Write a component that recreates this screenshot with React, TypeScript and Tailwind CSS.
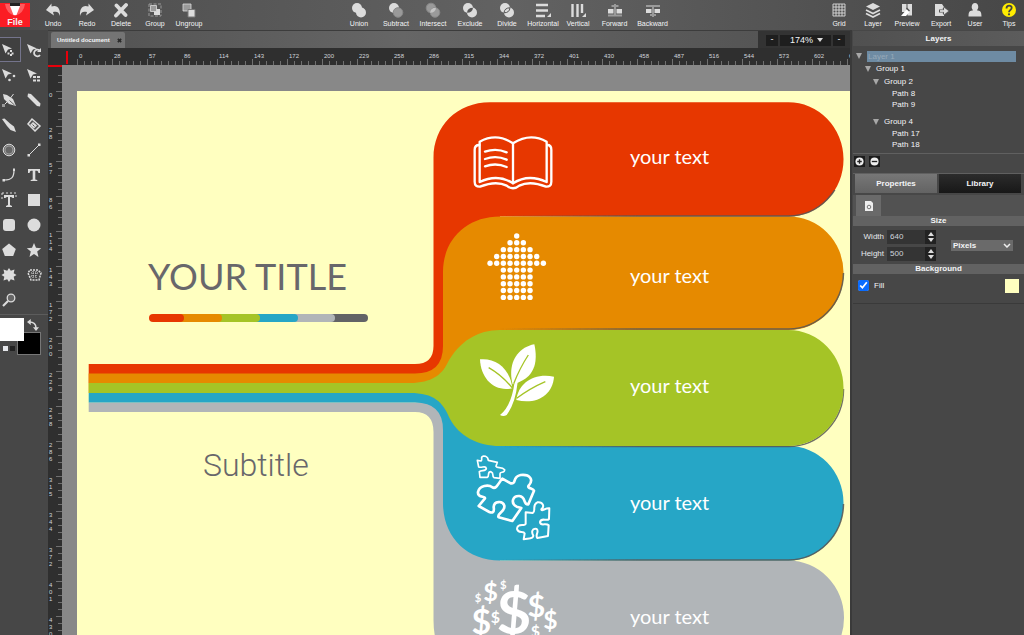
import React, { useState } from 'react';

const LIGHT = '#dcdcdc';
const DIM = '#9a9a9a';

type Item = { label: string; icon: React.ReactNode };

const corner = <path d="M16 11v4h-4z" fill={LIGHT} />;

const editItems: Item[] = [
  { label: 'Undo', icon: <path d="M1 8l5.500-6.500v3c6-2 9 2 8.500 9.500-1-4-3-5-7-4l1 3.500z" fill={LIGHT} /> },
  { label: 'Redo', icon: <path d="M15 8L9.500 1.500v3C3.500 2.500.5 6.500 1 14c1-4 3-5 7-4l-1 3.500z" fill={LIGHT} /> },
  { label: 'Delete', icon: <path d="M3.500 3.500l9 9.500M13 3L3 13.500" stroke={LIGHT} strokeWidth="3.800" strokeLinecap="round" /> },
  {
    label: 'Group',
    icon: (
      <>
        <path d="M2 2h12v12H2z" fill="none" stroke={DIM} strokeDasharray="3 1.5" />
        <path d="M7 7h6v6H7z" fill={LIGHT} />
        <path d="M3.500 3.500h6v6h-6z" fill={DIM} stroke={LIGHT} strokeWidth=".8" />
      </>
    ),
  },
  {
    label: 'Ungroup',
    icon: (
      <>
        <path d="M2 2h8v7H2z" fill={DIM} stroke={LIGHT} strokeWidth=".8" />
        <path d="M7 7.500h7V15H7z" fill={LIGHT} stroke="#777" />
      </>
    ),
  },
];

const booleanItems: Item[] = [
  {
    label: 'Union',
    icon: <><circle cx="6" cy="6" r="5" fill={LIGHT} /><circle cx="10" cy="10.500" r="5" fill={LIGHT} /></>,
  },
  {
    label: 'Subtract',
    icon: <><circle cx="6" cy="6" r="5" fill={LIGHT} /><circle cx="10" cy="10.500" r="4.800" fill={DIM} stroke="#888" /></>,
  },
  {
    label: 'Intersect',
    icon: (
      <>
        <circle cx="6" cy="6" r="4.800" fill={DIM} stroke="#888" />
        <circle cx="10" cy="10.500" r="4.800" fill={DIM} stroke="#888" />
        <path d="M5 10.800Q5.500 5.800 11 5.800 10.500 10.800 5 10.800z" fill="#c4c4c4" />
      </>
    ),
  },
  {
    label: 'Exclude',
    icon: (
      <>
        <circle cx="6" cy="6" r="5" fill={LIGHT} />
        <circle cx="10" cy="10.500" r="5" fill={LIGHT} />
        <path d="M5 10.800Q5.500 5.800 11 5.800 10.500 10.800 5 10.800z" fill="#555" />
      </>
    ),
  },
  {
    label: 'Divide',
    icon: (
      <>
        <circle cx="6" cy="6" r="5" fill={LIGHT} />
        <circle cx="10" cy="10.500" r="5" fill={LIGHT} />
        <path d="M5 10.800Q5.500 5.800 11 5.800 10.500 10.800 5 10.800z" fill={LIGHT} stroke="#555" />
      </>
    ),
  },
];

const alignItems: Item[] = [
  {
    label: 'Horizontal',
    icon: <><path d="M1 3h12M1 8.500h12M1 14h9" stroke={LIGHT} strokeWidth="2.400" />{corner}</>,
  },
  {
    label: 'Vertical',
    icon: <><path d="M2.500 2v13M7.500 2v13M12 2v9" stroke={LIGHT} strokeWidth="2.400" />{corner}</>,
  },
];

const orderItems: Item[] = [
  {
    label: 'Forward',
    icon: (
      <>
        <path d="M1 7h5.500v4.500H1zM9.500 7H15v4.500H9.500z" fill={LIGHT} />
        <path d="M8 2v11M4.500 4h7M1 13.500h14" stroke={DIM} strokeWidth="2" />
      </>
    ),
  },
  {
    label: 'Backward',
    icon: (
      <>
        <path d="M1 7h5.500v4H1zM9.500 7H15v4H9.500z" fill={LIGHT} />
        <path d="M8 3v12M1 4h14M5 13h6" stroke={DIM} strokeWidth="2" />
      </>
    ),
  },
];

const viewItems: Item[] = [
  {
    label: 'Grid',
    icon: <path d="M2 2h12v12H2zM5 2v12M8 2v12M11 2v12M2 5h12M2 8h12M2 11h12" fill="none" stroke={LIGHT} strokeWidth=".9" />,
  },
  {
    label: 'Layer',
    icon: (
      <>
        <path d="M8 1l7 3.500-7 3.500-7-3.500z" fill={LIGHT} />
        <path d="M1 8l7 3.500L15 8M1 11.500L8 15l7-3.500" fill="none" stroke={LIGHT} strokeWidth="1.700" />
      </>
    ),
  },
  {
    label: 'Preview',
    icon: (
      <>
        <path d="M3 2h4.500v8H3zM8.500 2H13v11.500H8.500z" fill={LIGHT} />
        <path d="M2 14l6-7 2.500 3L7 14z" fill="#fff" />
        <path d="M7.500 6l3 3" stroke="#555" strokeWidth="1.500" />
      </>
    ),
  },
  {
    label: 'Export',
    icon: (
      <>
        <path d="M2 2h7l2 3v9H2z" fill={LIGHT} />
        <path d="M6 9h8M10.500 5.500L15 9l-4.500 3.500" fill="none" stroke="#555" strokeWidth="3" />
        <path d="M7 9h6" stroke={LIGHT} strokeWidth="1.800" />
        <path d="M11 5.500L15.500 9 11 12.500z" fill={LIGHT} />
      </>
    ),
  },
  {
    label: 'User',
    icon: <path d="M8 1c4 0 4 6 1.800 7.200C13 8.800 14.500 9 14.500 14.500h-13c0-5.500 1.500-5.700 4.700-6.300C4 7 4 1 8 1z" fill={LIGHT} />,
  },
  {
    label: 'Tips',
    icon: (
      <>
        <circle cx="8" cy="8" r="7" fill="#ffec00" />
        <path d="M5.500 6.500c0-4 5.500-3.500 5.200-.5C10.500 8 8 8 8 10.200" fill="none" stroke="#444" strokeWidth="1.800" />
        <circle cx="8" cy="12.300" r="1.100" fill="#444" />
      </>
    ),
  },
];

const pointer = <path d="M1 2l10 4.500-4 1-2.500 4z" fill={LIGHT} />;

const tools: Item[] = [
  { label: 'Move', icon: <>{pointer}<path d="M10 8v7M6.500 11.500h7" stroke={LIGHT} strokeWidth="2" strokeDasharray="2 2" /></> },
  { label: 'Rotate', icon: <>{pointer}<path d="M14 9a3.300 3.300 0 1 0 0 4" fill="none" stroke={LIGHT} strokeWidth="1.800" /><path d="M15 6v4h-4z" fill={LIGHT} /></> },
  { label: 'Edit nodes', icon: <>{pointer}<circle cx="8.500" cy="13" r="1.300" fill={LIGHT} /><circle cx="13" cy="9" r="1.300" fill={LIGHT} /></> },
  { label: 'Edit segments', icon: <>{pointer}<path d="M7 10h8M7 13.500h8" stroke={LIGHT} strokeWidth="1.800" strokeDasharray="3 1" /></> },
  {
    label: 'Pen',
    icon: (
      <>
        <path d="M2 2l4 1 6 4 3 7-7-2-5-5z" fill={LIGHT} />
        <path d="M3 13l5-5M12.500 2l-3 4" stroke={LIGHT} />
        <path d="M1 12h3v3H1z" fill={DIM} />
        <path d="M8.500 8.500l5 4.500" stroke="#666" />
      </>
    ),
  },
  { label: 'Pencil', icon: <path d="M2 1.500l3 .5L14.500 11.500l-.5 3-3-.5L1.500 4.500z" fill={LIGHT} /> },
  { label: 'Brush', icon: <path d="M1 2l2.500-.5L9 6.500l4 3 2 5.500-5.500-2L6 9z" fill={LIGHT} /> },
  {
    label: 'Eraser',
    icon: (
      <>
        <path d="M6 2l8 7-5 5-7-7z" fill="#555" stroke={LIGHT} strokeWidth="1.500" />
        <path d="M7 5l4 3.500-3 3L4 8z" fill={LIGHT} />
        <path d="M6.500 7.500l2 2" stroke="#555" />
      </>
    ),
  },
  { label: 'Circle outline', icon: <><circle cx="8" cy="8" r="5.800" fill="#777" stroke={LIGHT} /><circle cx="8" cy="8" r="4" fill="#666" stroke={DIM} /></> },
  { label: 'Line', icon: <><path d="M3 13L13 3" stroke={LIGHT} /><path d="M1.500 12h2.500v2.500H1.500zM12 1.500h2.500V4H12z" fill={LIGHT} /></> },
  { label: 'Curve', icon: <><path d="M3 13c8 0 10-3 10-10" fill="none" stroke={LIGHT} strokeWidth="1.200" /><path d="M1.500 12h2.500v2.500H1.500zM12 1.500h2V4h-2z" fill={LIGHT} /></> },
  { label: 'Text', icon: <path d="M2 2h12v4h-1.500C12 4 11.500 3.800 9.300 3.800V12.500l2 .6V14H4.700v-.9l2-.6V3.800C4.500 3.800 4 4 3.500 6H2z" fill={LIGHT} /> },
  {
    label: 'Text box',
    icon: (
      <>
        <path d="M3 3h10v3h-1.500C11 5 10.500 5 9 5v8l2 1v1H5v-1l2-1V5C5.500 5 5 5 4.500 6H3z" fill={LIGHT} />
        <path d="M1 1h14v6M1 1v6" fill="none" stroke={LIGHT} strokeDasharray="2 2" />
      </>
    ),
  },
  { label: 'Rectangle', icon: <path d="M2 2h12v12H2z" fill={LIGHT} /> },
  { label: 'Rounded rectangle', icon: <rect x="2" y="2" width="12" height="12" rx="3" fill={LIGHT} /> },
  { label: 'Ellipse', icon: <circle cx="8" cy="8" r="6.500" fill={LIGHT} /> },
  { label: 'Polygon', icon: <path d="M8 1.500L14.800 7l-2.600 7H3.800L1.200 7z" fill={LIGHT} /> },
  { label: 'Star', icon: <path d="M8 1l2 4.800 5.200.4-4 3.400L12.500 15 8 12l-4.500 3 1.300-5.400-4-3.400L6 5.800z" fill={LIGHT} /> },
  { label: 'Burst', icon: <path d="M8 1l1.800 2.700L13.500 2.500l-.8 3.700L15.500 8l-2.800 1.800.8 3.700-3.700-1.200L8 15l-1.800-2.700-3.700 1.200.8-3.700L.5 8l2.800-1.800-.8-3.700 3.700 1.200z" fill={LIGHT} /> },
  {
    label: 'Pattern',
    icon: (
      <>
        <path d="M4 3h8l3 3-2 7H5L2 6z" fill="none" stroke={LIGHT} strokeWidth="1.500" strokeDasharray="2 1" />
        <path d="M5 6h7M5 9h6M7 4v8M10 4v8" stroke={LIGHT} strokeDasharray="1 1" />
      </>
    ),
  },
  { label: 'Zoom', icon: <><circle cx="10" cy="6" r="3.800" fill="#666" stroke={LIGHT} strokeWidth="1.300" /><path d="M7 9l-5 5" stroke={LIGHT} strokeWidth="2.200" /></> },
];

const layers = [
  { name: 'Group 1', row: 'h-[13px] pl-[12px]', open: true },
  { name: 'Group 2', row: 'h-[13px] pl-[20px]', open: true },
  { name: 'Path 8', row: 'h-[11px] pl-[39px]', open: false },
  { name: 'Path 9', row: 'h-[11px] pl-[39px]', open: false },
  { name: 'Group 4', row: 'mt-[5px] h-[13px] pl-[20px]', open: true },
  { name: 'Path 17', row: 'h-[11px] pl-[39px]', open: false },
  { name: 'Path 18', row: 'h-[11px] pl-[39px]', open: false },
];

// one major tick every 35px, labelled in document units
const ticks = (count: number) => Array.from({ length: count }, (_, i) => String(Math.floor(i * 28.67)));
const topMarks = ticks(23);
const sideMarks = ticks(16);
const minor = [0, 1, 2, 3, 4];

function Icon({ children, className = 'size-4' }: { children: React.ReactNode; className?: string }) {
  return (
    <svg viewBox="0 0 16 16" className={className} fill="none" aria-hidden="true">
      {children}
    </svg>
  );
}

function ToolbarButton({ item, className = '' }: { item: Item; className?: string }) {
  return (
    <button className={`flex flex-col items-center gap-[2px] ${className}`}>
      <Icon>{item.icon}</Icon>
      <span className="text-[7px] leading-[8px] text-gray-100">{item.label}</span>
    </button>
  );
}

function Header() {
  return (
    <header className="flex h-[30px] shrink-0 items-start justify-between overflow-hidden bg-linear-to-r from-[#4c4c4c] via-[#626262] to-[#474747] pt-[2px]">
      <div className="flex">
        <button className="mr-[6px] mt-px flex h-6 w-[30px] flex-col items-center bg-[#fb1d24]">
          <svg viewBox="0 0 30 14" className="h-[14px] w-[30px]" aria-hidden="true">
            <path d="M5 1q1 9 10 12q9-3 10-12" fill="#ff5a5e" />
            <path d="M10 3h10l-3.500 9h-3z" fill="#fff" />
            <path d="M10 0h10v3H10z" fill="#222" />
          </svg>
          <span className="text-[9px] leading-[10px] font-bold text-gray-100">File</span>
        </button>
        {editItems.map((item) => <ToolbarButton key={item.label} item={item} className="w-[34px]" />)}
      </div>
      <div className="flex pr-4">
        {booleanItems.map((item) => <ToolbarButton key={item.label} item={item} className="w-[37px]" />)}
        {alignItems.map((item) => <ToolbarButton key={item.label} item={item} className="w-[35px]" />)}
        {orderItems.map((item) => <ToolbarButton key={item.label} item={item} className="w-[38px]" />)}
      </div>
      <div className="-mr-[2px] flex">
        {viewItems.map((item) => <ToolbarButton key={item.label} item={item} className="w-[34px]" />)}
      </div>
    </header>
  );
}

function Tools() {
  const [active, setActive] = useState('Move');

  return (
    <nav className="w-12 shrink-0 overflow-hidden bg-[#474747] pt-[7px]">
      <div className="-ml-1 grid auto-rows-[25px] grid-cols-[25px_25px]">
        {tools.map((tool) => (
          <button
            key={tool.label}
            aria-label={tool.label}
            className={`flex items-center justify-center border ${tool.label === active ? 'border-[#74748c] bg-[#404040]' : 'border-transparent'}`}
            onClick={() => setActive(tool.label)}
          >
            <Icon>{tool.icon}</Icon>
          </button>
        ))}
      </div>
      <div className="mt-[2px] grid grid-cols-[17px_7px_17px] grid-rows-[14px_9px_14px] border-t border-[#5c5c5c] pt-[3px]">
        <button aria-label="Stroke color" className="col-start-2 col-end-4 row-start-2 row-end-4 border border-[#777] bg-black" />
        <button aria-label="Fill color" className="col-start-1 col-end-3 row-start-1 row-end-3 bg-white" />
        <button aria-label="Swap colors" className="col-start-3 row-start-1 flex items-center justify-center">
          <Icon className="size-3">
            <path d="M3 4q9 0 9 8" stroke={LIGHT} strokeWidth="2" />
            <path d="M5 0v8L0 4zM8 11h8l-4 5z" fill={LIGHT} />
          </Icon>
        </button>
        <button aria-label="Default colors" className="col-start-1 row-start-3 flex items-center gap-[2px] pl-[3px]">
          <span className="size-[5px] bg-gray-200" />
          <span className="size-[5px] bg-[#222]" />
        </button>
      </div>
    </nav>
  );
}

function TabBar() {
  return (
    <div className="flex h-[18px] shrink-0 border-t border-[#3c3c3c]">
      <div className="flex flex-1 items-end bg-linear-to-r from-[#505050] via-[#666] to-[#555] pl-[3px]">
        <div className="flex h-4 w-[74px] items-center justify-between rounded-t-xs bg-[#747474] pr-[3px] pl-[6px]">
          <span className="text-[6px] font-bold whitespace-nowrap text-gray-100">Untitled document</span>
          <button aria-label="Close document" className="text-[#2a2a2a]">
            <svg viewBox="0 0 6 6" className="size-[5px]" aria-hidden="true">
              <path d="M1 1l4 4M5 1L1 5" stroke="currentColor" strokeWidth="2" />
            </svg>
          </button>
        </div>
      </div>
      <div className="flex w-[92px] items-center gap-[2px] bg-[#333] pt-px pl-2 text-[9px] text-gray-100">
        <button aria-label="Zoom out" className="flex h-[11px] w-3 items-center justify-center bg-[#1e1e1e]">-</button>
        <div className="relative flex h-[11px] w-[51px] items-center bg-[#1e1e1e]">
          <select aria-label="Zoom level" className="h-[11px] w-full appearance-none pl-[10px] leading-[11px] outline-none">
            <option>174%</option>
          </select>
          <svg viewBox="0 0 6 4" className="pointer-events-none absolute right-2 h-1 w-[6px]" aria-hidden="true">
            <path d="M0 0h6L3 4z" fill="#ddd" />
          </svg>
        </div>
        <button aria-label="Zoom in" className="flex h-[11px] w-3 items-center justify-center bg-[#1e1e1e]">-</button>
      </div>
    </div>
  );
}

function TopRuler() {
  return (
    <div className="flex h-[17px] shrink-0 overflow-hidden bg-[#2f2f2f]">
      <div className="flex w-[29px] shrink-0 items-end pl-[18px]">
        <span className="mb-px h-[13px] w-[2px] bg-red-600" />
      </div>
      {topMarks.map((mark) => (
        <div key={mark} className="flex w-[35px] shrink-0 flex-col justify-end">
          <span className="pl-[2px] text-[6px] leading-[6px] text-gray-300">{mark}</span>
          <div className="flex items-end">
            {minor.map((n) => (
              <span key={n} className={`w-[7px] border-l border-[#707070] ${n === 0 ? 'h-[6px]' : 'h-1'}`} />
            ))}
          </div>
        </div>
      ))}
    </div>
  );
}

function SideRuler() {
  return (
    <div className="w-[14px] shrink-0 overflow-hidden bg-[#2f2f2f]">
      <div className="flex h-[26px] flex-col items-end">
        <span className="h-[2px] w-full bg-red-600" />
        <span className="h-[9px] w-1 border-b border-[#707070]" />
        <span className="h-[7px] w-1 border-b border-[#707070]" />
      </div>
      {sideMarks.map((mark) => (
        <div key={mark} className="flex h-[35px] justify-between">
          <div className="flex flex-col items-center pt-px pl-[1px] text-[6px] leading-[7px] text-gray-300">
            {mark.split('').map((digit, n) => <span key={n}>{digit}</span>)}
          </div>
          <div className="flex flex-col items-end">
            {minor.map((n) => (
              <span key={n} className={`h-[7px] border-t border-[#707070] ${n === 0 ? 'w-[6px]' : 'w-1'}`} />
            ))}
          </div>
        </div>
      ))}
    </div>
  );
}

const arrowRows = [1, 3, 5, 7, 9, 5, 5, 5, 5, 5];

const segments = [
  { from: 339, to: 364, color: '#626366' },
  { from: 301, to: 331, color: '#b1b5b8' },
  { from: 264, to: 294, color: '#26a6c6' },
  { from: 226, to: 256, color: '#a5c426' },
  { from: 188, to: 218, color: '#e68a00' },
  { from: 153, to: 180, color: '#e73700' },
];

const dollars = [
  { x: 174, y: 832, size: 34 },
  { x: 212, y: 829, size: 76 },
  { x: 250, y: 791, size: 34 },
  { x: 226, y: 893, size: 48 },
  { x: 184, y: 928, size: 102 },
  { x: 282, y: 928, size: 180 },
  { x: 349, y: 876, size: 92 },
  { x: 391, y: 912, size: 74 },
  { x: 346, y: 936, size: 48 },
];

function Artwork() {
  return (
    <svg viewBox="77 91 782 610" className="block h-[610px] w-[782px]" aria-hidden="true">
      <defs>
        <linearGradient id="edge" gradientUnits="userSpaceOnUse" x1="500" x2="640" y1="0" y2="0">
          <stop offset="0" stopColor="#555" stopOpacity="0" />
          <stop offset="1" stopColor="#555" stopOpacity=".85" />
        </linearGradient>
        <filter id="soft" filterUnits="userSpaceOnUse" x="480" y="190" width="380" height="390">
          <feGaussianBlur stdDeviation=".7" />
        </filter>
      </defs>

      {/* gray and blue run downwards */}
      <path d="M88.700 402.500H500V560.500H788A56 57 0 0 1 844 617.500A56 57 0 0 1 788 675H490Q433.500 675 433.500 620V432Q433.500 412 415 412H88.700z" fill="#b1b5b8" />
      <path d="M88.700 393H500V446H788A55 57 0 0 1 843.500 503A55 57 0 0 1 788 560.500H500C466 560.500 443 536 443 503V430Q443 402.500 415 402.500H88.700z" fill="#26a6c6" />

      {/* red and orange run upwards */}
      <path d="M88.700 364H415Q433.500 364 433.500 346V158C433.500 126 457 102.300 490 102.300H788A55 57 0 0 1 843.500 159A55 57 0 0 1 788 216.500H500V300L443 383H88.700z" fill="#e73700" />
      <path d="M88.700 373.500H415Q443 373.500 443 346V272C443 240 466 216.500 500 216.500H788A55 56 0 0 1 843.500 272A55 56 0 0 1 788 330H500V393H88.700z" fill="#e68a00" />

      <g filter="url(#soft)" stroke="url(#edge)" strokeWidth="1.500" fill="none">
        <path d="M500 216H788A55 57 0 0 0 843.500 160" />
        <path d="M500 329H788A55 57 0 0 0 843.500 273" />
        <path d="M500 560H788A55 57 0 0 0 843.500 504" />
        <path d="M500 446.500H788A55 57 0 0 0 843.500 389" />
      </g>

      <path d="M88.700 383H410C432 383 442 374 447 364C459 341 478 330 500 330H788A55 58 0 0 1 843.500 388A55 58 0 0 1 788 446H500C478 446 459 436 450 419C443 402 434 393 410 393H88.700z" fill="#a5c426" />

      {/* color bar under the title */}
      {segments.map((s) => (
        <path key={s.color} d={`M${s.from} 318H${s.to}`} stroke={s.color} strokeWidth="8" strokeLinecap="round" />
      ))}
      {segments.slice(0, 5).map((s) => (
        <path key={s.color} d={`M${s.from - 8} 314h8v8h-8z`} fill={s.color} />
      ))}
      {segments.slice(1).map((s) => (
        <circle key={s.color} cx={s.to} cy="318" r="4" fill={s.color} />
      ))}

      {/* book */}
      <g transform="translate(420 95) scale(.33333)" fill="none" stroke="#fff" strokeWidth="7" strokeLinejoin="round" strokeLinecap="round">
        <path d="M178 150Q164 150 164 164V260Q164 276 180 275Q228 256 260 272Q279 288 298 272Q330 256 378 275Q394 276 394 260V164Q394 150 382 150" />
        <path d="M179 140Q230 112 279 145Q330 112 380 140V261Q325 235 279 265Q233 235 179 261z" />
        <path d="M279 145V265M195 170Q228 158 260 172M195 192Q228 180 260 194M195 214Q228 202 260 216" />
      </g>

      {/* dotted arrow */}
      {arrowRows.map((count, row) =>
        Array.from({ length: count }, (_, n) => (
          <circle key={`${row}-${n}`} cx={516.700 + (n - (count - 1) / 2) * 6.670} cy={236 + row * 6.820} r="2.700" fill="#fff" />
        ))
      )}

      <g transform="translate(420 325) scale(.33333)">
        {/* leaves */}
        <g fill="#fff">
          <path d="M180 103C225 98 270 128 277 190C222 202 182 160 180 103z" />
          <path d="M343 58C356 118 340 162 278 178C262 118 290 68 343 58z" />
          <path d="M402 155C398 210 350 240 289 225C295 175 340 143 402 155z" />
          <path d="M284 170Q274 244 240 270Q250 276 260 270Q286 236 293 172z" />
        </g>
        <path d="M206 128Q245 150 278 190M325 90Q300 128 281 176M376 170Q330 190 290 220" fill="none" stroke="#a5c426" strokeWidth="4" />

        {/* puzzle pieces */}
        <g fill="none" stroke="#fff" strokeWidth="8" strokeLinejoin="round">
          <path d="M247 461L272 475C292 478 274 456 302 450C330 447 342 464 326 482C320 490 340 490 342 497L325 538C308 540 320 516 298 513C276 512 272 536 290 545L304 549L277 588L236 577C228 565 256 562 253 542C248 526 222 528 221 546C224 564 216 564 208 561L176 543L195 520C196 512 172 520 174 501C178 481 206 478 217 487C230 494 236 472 247 461z" />
          <path strokeWidth="5" d="M172 406L183 408C190 402 178 396 191 393C206 394 203 402 205 406L232 412L228 424C232 432 245 423 254 434C254 446 240 438 240 446L240 460L222 458C214 452 224 445 213 440C200 440 210 452 202 457L180 457L178 440C184 434 198 440 199 430C197 420 185 430 176 426z" />
          <path strokeWidth="6" d="M317 562L338 564C350 558 334 540 352 532C370 530 374 545 364 553C364 561 377 548 388 550L387 582C380 590 364 576 360 591C362 606 377 592 386 601L384 633L352 639C344 630 359 620 350 612C335 609 334 622 340 632C340 642 325 640 311 643L314 625C310 615 295 628 291 612C292 592 314 606 317 596z" />
        </g>

        <g fill="#fff" className="font-['Lato',sans-serif] font-bold" textAnchor="middle">
          {dollars.map((d) => <text key={`${d.x}-${d.y}`} x={d.x} y={d.y} fontSize={d.size}>$</text>)}
        </g>
      </g>
    </svg>
  );
}

// free-standing text objects placed on the document
const labels = [
  { text: 'YOUR TITLE', className: "left-[71px] top-[163px] text-[36px] leading-[44px] text-[#68676b] font-['Lato',sans-serif]" },
  { text: 'Subtitle', className: "left-[126px] top-[352px] text-[32px] leading-[44px] text-[#68676b] font-['Roboto',sans-serif] font-light" },
  { text: 'your text', className: "left-[553px] top-[53px] text-[20px] leading-[24px] text-white font-['Lato',sans-serif]" },
  { text: 'your text', className: "left-[553px] top-[172px] text-[20px] leading-[24px] text-white font-['Lato',sans-serif]" },
  { text: 'your text', className: "left-[553px] top-[282px] text-[20px] leading-[24px] text-white font-['Lato',sans-serif]" },
  { text: 'your text', className: "left-[553px] top-[399px] text-[20px] leading-[24px] text-white font-['Lato',sans-serif]" },
  { text: 'your text', className: "left-[553px] top-[513px] text-[20px] leading-[24px] text-white font-['Lato',sans-serif]" },
];

function Canvas() {
  return (
    <div className="min-w-0 flex-1 overflow-hidden bg-[#888] pt-[26px] pl-[15px]">
      <div className="relative h-[610px] w-[782px] bg-[#ffffc0]">
        <Artwork />
        {labels.map((label, i) => (
          <p key={i} className={`absolute whitespace-nowrap ${label.className}`}>{label.text}</p>
        ))}
      </div>
    </div>
  );
}

function Triangle() {
  return (
    <svg viewBox="0 0 6 6" className="size-[6px]" aria-hidden="true">
      <path d="M0 0h6L3 6z" fill="#a8a8a8" />
    </svg>
  );
}

function NumberField({ id, label, value }: { id: string; label: string; value: string }) {
  return (
    <div className="flex h-[14px] items-center">
      <label htmlFor={id} className="w-[34px] pr-[3px] text-right text-gray-200">{label}</label>
      <input id={id} defaultValue={value} className="h-[14px] w-[38px] bg-[#343434] pl-[3px] text-gray-300 outline-none" />
      <div className="flex h-[14px] w-[11px] flex-col items-center justify-center gap-[2px] bg-[#222]">
        <button aria-label={`Increase ${label}`}>
          <svg viewBox="0 0 6 4" className="block h-1 w-[6px]"><path d="M0 4h6L3 0z" fill="#ddd" /></svg>
        </button>
        <button aria-label={`Decrease ${label}`}>
          <svg viewBox="0 0 6 4" className="block h-1 w-[6px]"><path d="M0 0h6L3 4z" fill="#ddd" /></svg>
        </button>
      </div>
    </div>
  );
}

function Sidebar() {
  const [tab, setTab] = useState('Properties');

  const tabClass = (name: string) =>
    tab === name ? 'bg-linear-to-b from-[#777] to-[#636363]' : 'bg-linear-to-b from-[#2c2c2c] to-[#181818]';

  return (
    <aside className="w-[174px] shrink-0 overflow-hidden border-l-2 border-[#3a3a3a] bg-[#474747] pt-px pl-px text-[8px] leading-[10px] text-gray-100">
      <h2 className="h-[15px] bg-linear-to-r from-[#505050] to-[#5c5c5c] text-center leading-[15px] font-bold">Layers</h2>
      <div className="h-[108px] border-b border-[#606060] pt-1">
        <div className="flex h-3 items-center gap-[5px] pr-2 pl-[3px]">
          <button aria-label="Toggle Layer 1"><Triangle /></button>
          <span className="h-[11px] flex-1 bg-[#6e8ba3] pl-px leading-[11px] text-[#97a9b8]">Layer 1</span>
        </div>
        {layers.map((layer) => (
          <div key={layer.name} className={`flex items-center gap-[5px] ${layer.row}`}>
            {layer.open && <button aria-label={`Toggle ${layer.name}`}><Triangle /></button>}
            <span>{layer.name}</span>
          </div>
        ))}
      </div>
      <div className="flex h-[19px] items-start gap-1 pt-[2px] pl-px">
        <button aria-label="Add layer" className="size-[11px] bg-[#1c1c1c] p-px">
          <svg viewBox="0 0 10 10" aria-hidden="true"><circle cx="5" cy="5" r="4.500" fill="#eee" /><path d="M5 2.500v5M2.500 5h5" stroke="#222" strokeWidth="1.500" /></svg>
        </button>
        <button aria-label="Remove layer" className="size-[11px] bg-[#1c1c1c] p-px">
          <svg viewBox="0 0 10 10" aria-hidden="true"><circle cx="5" cy="5" r="4.500" fill="#eee" /><path d="M2 5h6" stroke="#222" strokeWidth="1.500" /></svg>
        </button>
      </div>
      <div className="grid h-[20px] grid-cols-2 gap-[2px] border-t border-[#606060] pr-[3px] pl-[2px] font-bold">
        {['Properties', 'Library'].map((name) => (
          <button key={name} className={tabClass(name)} onClick={() => setTab(name)}>{name}</button>
        ))}
      </div>
      <div className="mt-[2px] h-[21px] bg-[#525252] pl-[3px]">
        <button aria-label="Document" className="flex h-[21px] w-[25px] items-center justify-center bg-[#6a6a6a]">
          <svg viewBox="0 0 8 10" className="h-[10px] w-2" aria-hidden="true">
            <path d="M0 0h6l2 2v8H0z" fill="#eee" />
            <circle cx="4" cy="6" r="1.800" fill="none" stroke="#777" />
          </svg>
        </button>
      </div>
      <h3 className="h-[10px] bg-[#626262] text-center font-bold">Size</h3>
      <div className="flex h-[38px] items-center justify-between pr-[11px]">
        <div className="flex flex-col gap-[3px]">
          <NumberField id="doc-width" label="Width" value="640" />
          <NumberField id="doc-height" label="Height" value="500" />
        </div>
        <div className="relative flex items-center">
          <select aria-label="Units" className="h-[11px] w-[62px] appearance-none bg-[#6a6a6a] pl-[2px] leading-[11px] font-bold outline-none">
            <option>Pixels</option>
          </select>
          <svg viewBox="0 0 8 5" className="pointer-events-none absolute right-[2px] h-[5px] w-2" aria-hidden="true">
            <path d="M1 1l3 3 3-3" fill="none" stroke="#eee" strokeWidth="1.500" />
          </svg>
        </div>
      </div>
      <h3 className="h-[10px] bg-[#626262] text-center font-bold">Background</h3>
      <div className="flex h-[30px] items-center gap-[5px] border-b border-[#3a3a3a] pr-[5px] pb-[6px] pl-[5px]">
        <input id="fill" type="checkbox" defaultChecked className="size-[11px] accent-[#0a6cff]" />
        <label htmlFor="fill">Fill</label>
        <button aria-label="Background color" className="ml-auto size-[14px] bg-[#ffffc0]" />
      </div>
    </aside>
  );
}

export default function App() {
  return (
    <div className="flex h-screen flex-col overflow-hidden bg-[#474747] font-['Liberation_Sans',Arial,sans-serif]">
      <Header />
      <div className="flex min-h-0 flex-1">
        <Tools />
        <main className="flex min-w-0 flex-1 flex-col">
          <TabBar />
          <TopRuler />
          <div className="flex min-h-0 flex-1">
            <SideRuler />
            <Canvas />
          </div>
        </main>
        <Sidebar />
      </div>
    </div>
  );
}
